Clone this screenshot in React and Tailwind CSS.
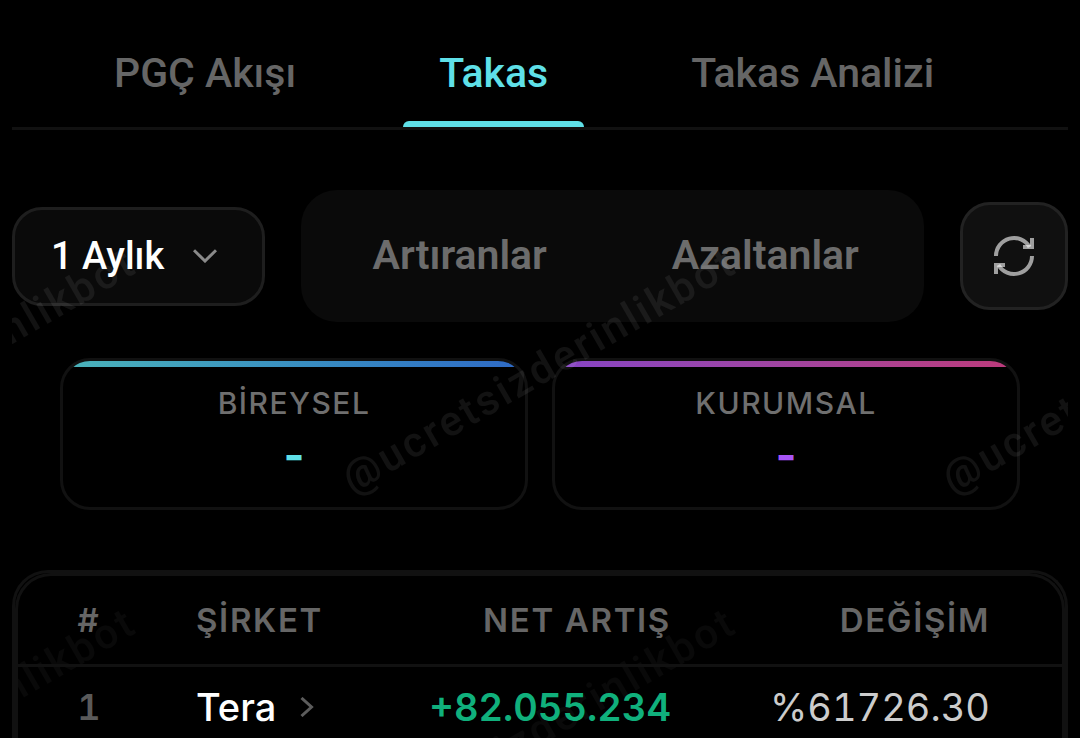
import React from "react";

const tabs = ["PGÇ Akışı", "Takas", "Takas Analizi"];

const rows = [
  { rank: 1, company: "Tera", net: "+82.055.234", change: "%61726.30" },
];

function Tabs() {
  return (
    <nav className="flex gap-[71px] border-b-3 border-[#111111] pt-[18px] pl-[66px] font-[Roboto,sans-serif] text-[41px] leading-[48px] font-medium">
      {tabs.map((tab) => {
        const active = tab === "Takas";
        return (
          <button
            key={tab}
            type="button"
            aria-current={active ? "page" : undefined}
            className={
              active
                ? "flex flex-col whitespace-nowrap text-[#5fe0e8]"
                : "flex flex-col whitespace-nowrap text-[#666666]"
            }
          >
            <span className="px-9 pt-[31px] pb-6">{tab}</span>
            <span
              className={
                active ? "h-[6px] w-full rounded-t-md bg-[#5fe0e8]" : "h-[6px] w-full"
              }
            />
          </button>
        );
      })}
    </nav>
  );
}

function RefreshIcon() {
  return (
    <svg
      viewBox="0 0 24 24"
      className="size-12"
      fill="none"
      stroke="#ffffff"
      strokeOpacity="0.6"
      strokeWidth="2"
      aria-hidden="true"
    >
      <path d="M3 12a9 9 0 0 1 16.8-4.5" />
      <path d="M21 3v4.5h-4.5" />
      <path d="M21 12a9 9 0 0 1-16.8 4.5" />
      <path d="M3 21v-4.5h4.5" />
    </svg>
  );
}

function Controls() {
  return (
    <div className="flex items-center gap-9 font-[Roboto,sans-serif] text-[41px] font-medium">
      <div className="relative shrink-0">
        <select
          aria-label="Dönem"
          defaultValue="1 Aylık"
          className="h-[99px] w-[253px] appearance-none rounded-[30px] border-3 border-[#1e1e1e] bg-[#0a0a0a] pl-9 text-[38px] text-white"
        >
          <option>1 Aylık</option>
        </select>
        <svg
          viewBox="0 0 24 14"
          className="pointer-events-none absolute top-[42px] right-12 h-[14px] w-6"
          fill="none"
          stroke="#8a8a8a"
          strokeWidth="3"
          aria-hidden="true"
        >
          <path d="M1 1.2 12 12 23 1.2" />
        </svg>
      </div>

      <div className="flex flex-1 gap-3 rounded-[36px] bg-[#0a0a0a] p-3 font-semibold text-[#6c6c6c]">
        <button type="button" className="h-[108px] flex-1">
          Artıranlar
        </button>
        <button type="button" className="h-[108px] flex-1">
          Azaltanlar
        </button>
      </div>

      <button
        type="button"
        aria-label="Yenile"
        className="flex size-[108px] shrink-0 items-center justify-center rounded-[30px] border-3 border-[#222222] bg-[#101010]"
      >
        <RefreshIcon />
      </button>
    </div>
  );
}

function StatCard({ label, bar, color }) {
  return (
    <div className="h-[152px] flex-1 overflow-hidden rounded-[30px] border-3 border-[#111111] text-center">
      <div className={bar} />
      <div className="pt-[18px] text-[30px] leading-[36px] font-medium tracking-wider text-[#6f6f6f]">
        {label}
      </div>
      <div className={color}>-</div>
    </div>
  );
}

function ShareTable() {
  return (
    <div className="relative mt-15 rounded-t-[36px] border-3 border-b-0 border-[#111111]">
      <div className="rounded-t-[36px] border-3 border-b-0 border-[#111111] bg-black/50">
        <table className="w-full table-fixed">
          <colgroup>
            <col className="w-[142px]" />
            <col className="w-[200px]" />
            <col />
            <col className="w-[355px]" />
          </colgroup>
          <thead>
            <tr className="h-[89px] border-b-3 border-[#111111] text-[33px] leading-[40px] tracking-wider text-[#666666]">
              <th className="font-semibold">#</th>
              <th className="pl-9 text-left font-semibold">ŞİRKET</th>
              <th className="pr-9 text-right font-semibold">NET ARTIŞ</th>
              <th className="pr-18 text-right font-semibold">DEĞİŞİM</th>
            </tr>
          </thead>
          <tbody>
            {rows.map((row) => (
              <tr key={row.rank} className="h-[82px] text-[38px] leading-[48px] tabular-nums">
                <td className="text-center text-[36px] font-semibold text-[#5a5a5a]">
                  {row.rank}
                </td>
                <td className="pl-9">
                  <a href="#tera" className="flex items-center gap-6 font-medium text-white">
                    {row.company}
                    <svg
                      viewBox="0 0 14 20"
                      className="h-5 w-[14px]"
                      fill="none"
                      stroke="#5c5c5c"
                      strokeWidth="3"
                      aria-hidden="true"
                    >
                      <path d="M1.5 1 11.5 10 1.5 19" />
                    </svg>
                  </a>
                </td>
                <td className="pr-9 text-right font-semibold text-[#10b07c]">{row.net}</td>
                <td className="pr-18 text-right text-[#cccccc]">{row.change}</td>
              </tr>
            ))}
          </tbody>
        </table>
      </div>
    </div>
  );
}

function Watermark() {
  return (
    <svg className="pointer-events-none absolute inset-0 size-full" aria-hidden="true">
      <defs>
        <pattern id="mark" x="228" y="2" width="600" height="360" patternUnits="userSpaceOnUse">
          <text
            x="300"
            y="192"
            textAnchor="middle"
            transform="rotate(-30 300 180)"
            fill="#ffffff"
            fillOpacity="0.07"
            className="font-[Roboto,sans-serif] text-[42px] font-medium tracking-[3px]"
          >
            @ucretsizderinlikbot
          </text>
        </pattern>
      </defs>
      <rect width="100%" height="100%" fill="url(#mark)" />
    </svg>
  );
}

export default function App() {
  return (
    <main className="h-dvh overflow-hidden bg-black px-3 font-[Inter,sans-serif] text-white">
      <Tabs />
      <section className="relative mt-15">
        <Controls />
        <div className="flex gap-6 px-12 pt-9">
          <StatCard
            label="BİREYSEL"
            bar="h-[6px] bg-linear-to-r from-[#4bb3b9] to-[#2f69c5]"
            color="text-[45px] leading-[68px] font-bold text-[#5fe0e8]"
          />
          <StatCard
            label="KURUMSAL"
            bar="h-[6px] bg-linear-to-r from-[#8644c5] to-[#bd3a7a]"
            color="text-[45px] leading-[68px] font-bold text-[#a855f7]"
          />
        </div>
        <Watermark />
        <ShareTable />
      </section>
    </main>
  );
}
